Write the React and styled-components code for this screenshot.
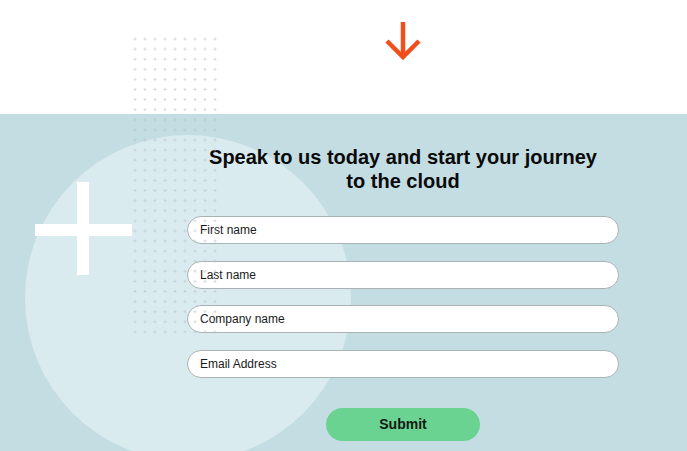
import React from "react";
import styled, { createGlobalStyle } from "styled-components";

const Global = createGlobalStyle`
  html, body { margin: 0; padding: 0; background: #fff; overflow: hidden; }
  body { font-family: "Liberation Sans", Arial, sans-serif; }
  * { box-sizing: border-box; }
`;

const Page = styled.div`
  position: relative;
  width: 687px;
  height: 451px;
  overflow: hidden;
  display: flex;
  flex-direction: column;
`;

const Top = styled.header`
  height: 114px;
  display: flex;
  justify-content: flex-start;
  padding-top: 20px;
  padding-left: 385px;
  background: #fff;
`;

const Bottom = styled.section`
  flex: 1;
  background: #c3dde2;
  position: relative;
  padding: 31px 0 0 187px;
`;

const Circle = styled.div`
  position: absolute;
  left: 25px;
  top: 21px;
  width: 326px;
  height: 326px;
  border-radius: 50%;
  background: #daebef;
`;

const PlusBar = styled.div`
  position: absolute;
  background: #fff;
  left: ${(p) => p.$x}px;
  top: ${(p) => p.$y}px;
  width: ${(p) => p.$w}px;
  height: ${(p) => p.$h}px;
`;

const DotGrid = styled.svg`
  position: absolute;
  left: 130px;
  top: 34px;
  pointer-events: none;
`;

const Form = styled.form`
  position: relative;
  width: 432px;
  display: flex;
  flex-direction: column;
`;

const Heading = styled.h2`
  margin: 0 0 23px;
  font-size: 20px;
  line-height: 24px;
  font-weight: 700;
  text-align: center;
  color: #0a0a0a;
`;

const Fields = styled.div`
  display: flex;
  flex-direction: column;
  gap: 16.6px;
`;

const Input = styled.input`
  width: 100%;
  height: 28px;
  border-radius: 14px;
  border: 1px solid #a9b3b6;
  background: #fff;
  padding: 0 12px;
  font-family: "Liberation Sans", Arial, sans-serif;
  font-size: 12px;
  color: #1a1a1a;
  outline: none;
  &::placeholder { color: #1a1a1a; opacity: 1; }
`;

const Submit = styled.button`
  align-self: center;
  margin-top: 30px;
  width: 154px;
  height: 33px;
  border: none;
  border-radius: 17px;
  background: #6bd392;
  font-family: "Liberation Sans", Arial, sans-serif;
  font-size: 14px;
  font-weight: 700;
  color: #0e1a12;
`;

function Dots() {
  const cols = 9;
  const rows = 30;
  const items = [];
  for (let r = 0; r < rows; r++) {
    for (let c = 0; c < cols; c++) {
      const x = 5 + c * 10;
      const y = 5 + r * 10.1;
      items.push(
        <path
          key={`${r}-${c}`}
          d={`M${x - 1.5} ${y}H${x + 1.5}M${x} ${y - 1.5}V${y + 1.5}`}
        />
      );
    }
  }
  return (
    <DotGrid width="95" height="310" viewBox="0 0 95 310">
      <g stroke="#b9c3c7" strokeWidth="1" opacity="0.6">{items}</g>
    </DotGrid>
  );
}

function Arrow() {
  return (
    <svg width="36" height="40" viewBox="0 0 36 40">
      <g stroke="#f04e1b" strokeWidth="4.5" fill="none" strokeLinecap="butt">
        <path d="M18 2V36" />
        <path d="M2 21L18 37L34 21" />
      </g>
    </svg>
  );
}

export default function App() {
  return (
    <>
      <Global />
      <Page>
        <Top>
          <Arrow />
        </Top>
        <Bottom>
          <Circle />
          <PlusBar $x={35} $y={110} $w={97} $h={12} />
          <PlusBar $x={77} $y={68} $w={12} $h={93} />
          <Form onSubmit={(e) => e.preventDefault()}>
            <Heading>
              Speak to us today and start your journey
              <br />
              to the cloud
            </Heading>
            <Fields>
              <Input placeholder="First name" />
              <Input placeholder="Last name" />
              <Input placeholder="Company name" />
              <Input placeholder="Email Address" />
            </Fields>
            <Submit type="submit">Submit</Submit>
          </Form>
        </Bottom>
        <Dots />
      </Page>
    </>
  );
}
